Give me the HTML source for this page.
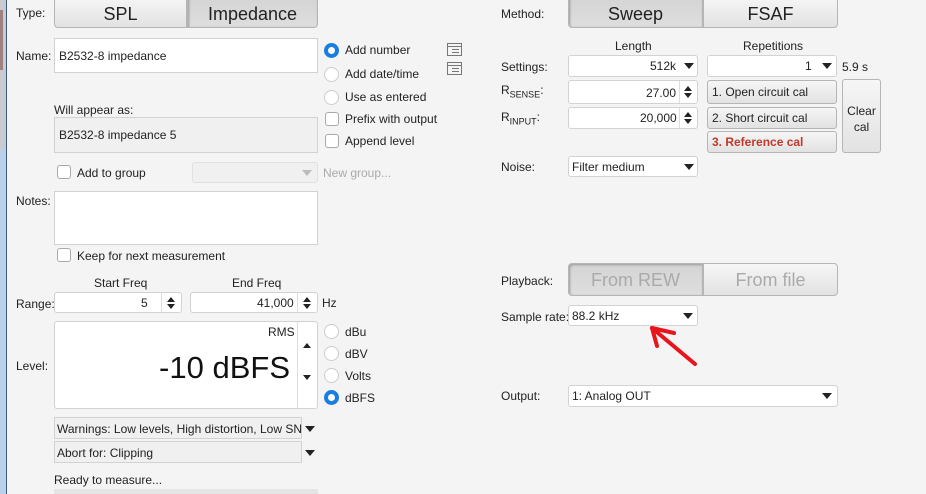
<!DOCTYPE html>
<html><head><meta charset="utf-8"><style>
*{box-sizing:border-box;margin:0;padding:0}
body{width:926px;height:494px;overflow:hidden;background:#f4f4f4;font-family:"Liberation Sans",sans-serif;font-size:12px;color:#222;position:relative}
.a{position:absolute;white-space:nowrap}
.box{position:absolute;background:#fff;border:1px solid #d2d2d2;border-radius:3px}
.gbox{position:absolute;background:#f0f0f0;border:1px solid #d2d2d2}
.btn{position:absolute;border:1px solid #b5b5b5;background:linear-gradient(#f6f6f6,#e2e2e2);border-radius:3px;text-align:center}
.sel{background:linear-gradient(#d4d4d4,#dedede);box-shadow:inset 1px 1px 2px #999}
.rad{position:absolute;width:15px;height:15px;border-radius:50%;border:1px solid #ccc;background:#fff}
.rad.on{border:4px solid #1a7de0}
.chk{position:absolute;width:14px;height:14px;border:1px solid #aaa;border-radius:3px;background:#fff}
.dd{position:absolute;width:0;height:0;border-left:5px solid transparent;border-right:5px solid transparent;border-top:6px solid #222}
</style></head><body>
<div class="a" style="left:0;top:0;width:6px;height:494px;background:#b9d1ea"></div>
<div class="a" style="left:0;top:0;width:6px;height:150px;background:#c8ccd2"></div>
<div class="a" style="left:0;top:10px;width:3px;height:60px;background:#a08080"></div>
<div class="a" style="left:6px;top:0;width:1px;height:494px;background:#3f5a78"></div>

<div class="a" style="left:16px;top:6px">Type:</div>
<div class="btn" style="left:54px;top:-4px;width:133px;height:32px;font-size:18px;line-height:34px;border-radius:0 0 0 4px">SPL</div>
<div class="btn sel" style="left:187px;top:-4px;width:131px;height:32px;font-size:18px;line-height:34px;border-radius:0 0 4px 0">Impedance</div>

<div class="a" style="left:16px;top:49px">Name:</div>
<div class="box" style="left:54px;top:38px;width:264px;height:35px;border-radius:0"></div>
<div class="a" style="left:59px;top:49px">B2532-8 impedance</div>

<div class="rad on" style="left:324px;top:43px"></div><div class="a" style="left:345px;top:43px">Add number</div>
<div class="rad" style="left:324px;top:67px"></div><div class="a" style="left:345px;top:67px">Add date/time</div>
<div class="rad" style="left:324px;top:90px"></div><div class="a" style="left:345px;top:90px">Use as entered</div>
<div class="chk" style="left:325px;top:112px"></div><div class="a" style="left:345px;top:112px">Prefix with output</div>
<div class="chk" style="left:325px;top:134px"></div><div class="a" style="left:345px;top:134px">Append level</div>
<svg class="a" style="left:447px;top:43px" width="15" height="32"><g fill="none" stroke="#777"><rect x="0.5" y="0.5" width="14" height="12"/><line x1="1" y1="3.5" x2="14" y2="3.5"/><line x1="5" y1="6.5" x2="12" y2="6.5"/><line x1="5" y1="9.5" x2="12" y2="9.5"/><rect x="0.5" y="19.5" width="14" height="12"/><line x1="1" y1="22.5" x2="14" y2="22.5"/><line x1="5" y1="25.5" x2="12" y2="25.5"/><line x1="5" y1="28.5" x2="12" y2="28.5"/></g></svg>

<div class="a" style="left:54px;top:103px">Will appear as:</div>
<div class="gbox" style="left:54px;top:117px;width:264px;height:36px"></div>
<div class="a" style="left:59px;top:128px">B2532-8 impedance 5</div>

<div class="chk" style="left:57px;top:165px"></div><div class="a" style="left:77px;top:166px">Add to group</div>
<div class="gbox" style="left:192px;top:162px;width:126px;height:21px;border-radius:3px;border-color:#e0e0e0"></div>
<div class="dd" style="left:302px;top:170px;border-top-color:#bbb"></div>
<div class="a" style="left:323px;top:166px;color:#aaa">New group...</div>

<div class="a" style="left:16px;top:194px">Notes:</div>
<div class="box" style="left:54px;top:191px;width:264px;height:54px;border-radius:0"></div>
<div class="chk" style="left:57px;top:248px"></div><div class="a" style="left:77px;top:249px">Keep for next measurement</div>

<div class="a" style="left:94px;top:276px">Start Freq</div>
<div class="a" style="left:232px;top:276px">End Freq</div>
<div class="a" style="left:16px;top:297px">Range:</div>
<div class="box" style="left:54px;top:292px;width:128px;height:21px"></div>
<div class="a" style="left:161px;top:293px;width:1px;height:19px;background:#ddd"></div>
<div class="a" style="left:141px;top:296px">5</div>
<div class="box" style="left:190px;top:292px;width:128px;height:21px"></div>
<div class="a" style="left:297px;top:293px;width:1px;height:19px;background:#ddd"></div>
<div class="a" style="left:257px;top:296px">41,000</div>
<svg class="a" style="left:166px;top:296px" width="10" height="14"><path d="M1 6L5 1L9 6ZM1 8L5 13L9 8Z" fill="#222"/></svg>
<svg class="a" style="left:302px;top:296px" width="10" height="14"><path d="M1 6L5 1L9 6ZM1 8L5 13L9 8Z" fill="#222"/></svg>
<div class="a" style="left:322px;top:296px">Hz</div>

<div class="a" style="left:16px;top:359px">Level:</div>
<div class="box" style="left:54px;top:321px;width:264px;height:88px"></div>
<div class="a" style="left:297px;top:322px;width:1px;height:86px;background:#ddd"></div>
<div class="a" style="left:268px;top:325px">RMS</div>
<div class="a" style="right:636px;top:350px;font-size:31px;color:#111">-10 dBFS</div>
<svg class="a" style="left:302px;top:342px" width="10" height="40"><path d="M1 6L5 1L9 6ZM1 33L5 38L9 33Z" fill="#222"/></svg>
<div class="rad" style="left:324px;top:324px"></div><div class="a" style="left:345px;top:325px">dBu</div>
<div class="rad" style="left:324px;top:346px"></div><div class="a" style="left:345px;top:347px">dBV</div>
<div class="rad" style="left:324px;top:368px"></div><div class="a" style="left:345px;top:369px">Volts</div>
<div class="rad on" style="left:324px;top:390px"></div><div class="a" style="left:345px;top:391px">dBFS</div>

<div class="gbox" style="left:54px;top:417px;width:248px;height:22px"></div>
<div class="a" style="left:57px;top:422px">Warnings: Low levels, High distortion, Low SN</div>
<div class="dd" style="left:305px;top:426px"></div>
<div class="gbox" style="left:54px;top:441px;width:248px;height:22px"></div>
<div class="a" style="left:57px;top:446px">Abort for: Clipping</div>
<div class="dd" style="left:305px;top:450px"></div>
<div class="a" style="left:54px;top:473px">Ready to measure...</div>
<div class="a" style="left:54px;top:489px;width:264px;height:5px;background:#e4e4e4"></div>

<div class="a" style="left:501px;top:7px">Method:</div>
<div class="btn sel" style="left:568px;top:-4px;width:135px;height:32px;font-size:18px;line-height:34px;border-radius:0 0 0 4px">Sweep</div>
<div class="btn" style="left:703px;top:-4px;width:135px;height:32px;font-size:18px;line-height:34px;border-radius:0 0 4px 0">FSAF</div>

<div class="a" style="left:615px;top:39px">Length</div>
<div class="a" style="left:743px;top:39px">Repetitions</div>
<div class="a" style="left:501px;top:60px">Settings:</div>
<div class="box" style="left:568px;top:55px;width:130px;height:22px"></div>
<div class="a" style="left:650px;top:59px">512k</div><div class="dd" style="left:684px;top:63px"></div>
<div class="box" style="left:707px;top:55px;width:130px;height:22px"></div>
<div class="a" style="left:805px;top:59px">1</div><div class="dd" style="left:822px;top:63px"></div>
<div class="a" style="left:842px;top:60px">5.9 s</div>

<div class="a" style="left:501px;top:83px">R<sub style="font-size:9px">SENSE</sub>:</div>
<div class="box" style="left:568px;top:80px;width:130px;height:24px"></div>
<div class="a" style="left:679px;top:81px;width:1px;height:22px;background:#ddd"></div>
<div class="a" style="left:646px;top:86px">27.00</div>
<svg class="a" style="left:683px;top:85px" width="10" height="14"><path d="M1 6L5 1L9 6ZM1 8L5 13L9 8Z" fill="#222"/></svg>
<div class="a" style="left:501px;top:110px">R<sub style="font-size:9px">INPUT</sub>:</div>
<div class="box" style="left:568px;top:107px;width:130px;height:22px"></div>
<div class="a" style="left:679px;top:108px;width:1px;height:20px;background:#ddd"></div>
<div class="a" style="left:640px;top:111px">20,000</div>
<svg class="a" style="left:683px;top:111px" width="10" height="14"><path d="M1 6L5 1L9 6ZM1 8L5 13L9 8Z" fill="#222"/></svg>

<div class="btn" style="left:707px;top:80px;width:130px;height:24px;text-align:left;padding-left:4px;line-height:23px">1. Open circuit cal</div>
<div class="btn" style="left:707px;top:107px;width:130px;height:22px;text-align:left;padding-left:4px;line-height:21px">2. Short circuit cal</div>
<div class="btn" style="left:707px;top:131px;width:130px;height:22px;text-align:left;padding-left:4px;line-height:21px;color:#c0392b;font-weight:bold">3. Reference cal</div>
<div class="btn" style="left:842px;top:79px;width:39px;height:74px;padding-top:23px;line-height:16px">Clear<br>cal</div>

<div class="a" style="left:501px;top:160px">Noise:</div>
<div class="box" style="left:568px;top:156px;width:130px;height:21px"></div>
<div class="a" style="left:572px;top:160px">Filter medium</div><div class="dd" style="left:684px;top:164px"></div>

<div class="a" style="left:501px;top:274px">Playback:</div>
<div class="btn sel" style="left:568px;top:263px;width:135px;height:33px;font-size:18px;line-height:33px;color:#aaa;border-radius:4px 0 0 4px">From REW</div>
<div class="btn" style="left:703px;top:263px;width:135px;height:33px;font-size:18px;line-height:33px;color:#aaa;border-radius:0 4px 4px 0">From file</div>

<div class="a" style="left:501px;top:310px">Sample rate:</div>
<div class="box" style="left:568px;top:305px;width:130px;height:21px"></div>
<div class="a" style="left:572px;top:309px">88.2 kHz</div><div class="dd" style="left:683px;top:313px"></div>
<svg class="a" style="left:640px;top:320px" width="70" height="50"><g stroke="#e8141e" stroke-width="4" fill="none" stroke-linecap="round"><path d="M12 8L55 44"/><path d="M12 8L34 13"/><path d="M12 8L17 26"/></g></svg>

<div class="a" style="left:501px;top:389px">Output:</div>
<div class="box" style="left:568px;top:385px;width:270px;height:22px"></div>
<div class="a" style="left:572px;top:389px">1: Analog OUT</div><div class="dd" style="left:822px;top:393px"></div>
</body></html>
